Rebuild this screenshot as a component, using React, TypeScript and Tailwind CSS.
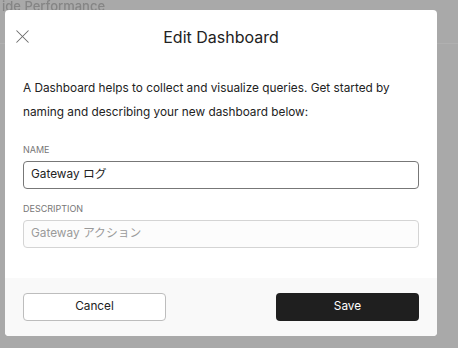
import { X } from 'lucide-react';

export default function App() {
  return (
    <div className="relative w-[458px] h-[348px] overflow-hidden bg-[#a9a9a9]" style={{ fontFamily: 'Inter, "Noto Sans CJK JP", sans-serif' }}>
      {/* page behind the overlay */}
      <div className="absolute inset-0 blur-[0.6px]">
        <div className="h-[44px] border-b border-[#b0b0b0] pl-[2px] text-[13px] leading-[12px] font-medium text-[#858585]">ide Performance</div>
      </div>

      <div className="absolute left-[5px] top-[10px] w-[432px] rounded-[4px] bg-white overflow-hidden">
        <div className="relative h-[52px] flex items-center justify-center">
          <button className="absolute left-[6px] top-[15px] text-[#6b6b6b]">
            <X className="h-[23px] w-[23px]" strokeWidth={1.1} />
          </button>
          <h2 className="text-[16px] text-[#222] pt-[1px]">Edit Dashboard</h2>
        </div>

        <div className="px-[18px] pb-[30px]">
          <p className="mt-[14px] text-[11.8px] leading-[24px] text-[#222]">
            A Dashboard helps to collect and visualize queries. Get started by naming and describing your new dashboard below:
          </p>

          <label className="block mt-[20px] text-[9px] leading-[12px] uppercase text-[#777]">Name</label>
          <div className="mt-[5px] h-[28px] rounded-[4px] border border-[#777] flex items-center px-[7px] text-[11.8px] text-[#222]">
            Gateway ログ
          </div>

          <label className="block mt-[14px] text-[9px] leading-[12px] uppercase text-[#777]">Description</label>
          <div className="mt-[5px] h-[28px] rounded-[4px] border border-[#d4d4d4] bg-[#fcfcfc] flex items-center px-[7px] text-[11.8px] text-[#9a9a9a]">
            Gateway アクション
          </div>
        </div>

        <div className="h-[58px] bg-[#f9f9f9] px-[18px] flex items-center justify-between">
          <button className="w-[143px] h-[28px] rounded-[4px] border border-[#bdbdbd] bg-white text-[11.8px] text-[#222]">Cancel</button>
          <button className="w-[143px] h-[28px] rounded-[4px] bg-[#1f1f1f] text-[11.8px] text-white">Save</button>
        </div>
      </div>
    </div>
  );
}
